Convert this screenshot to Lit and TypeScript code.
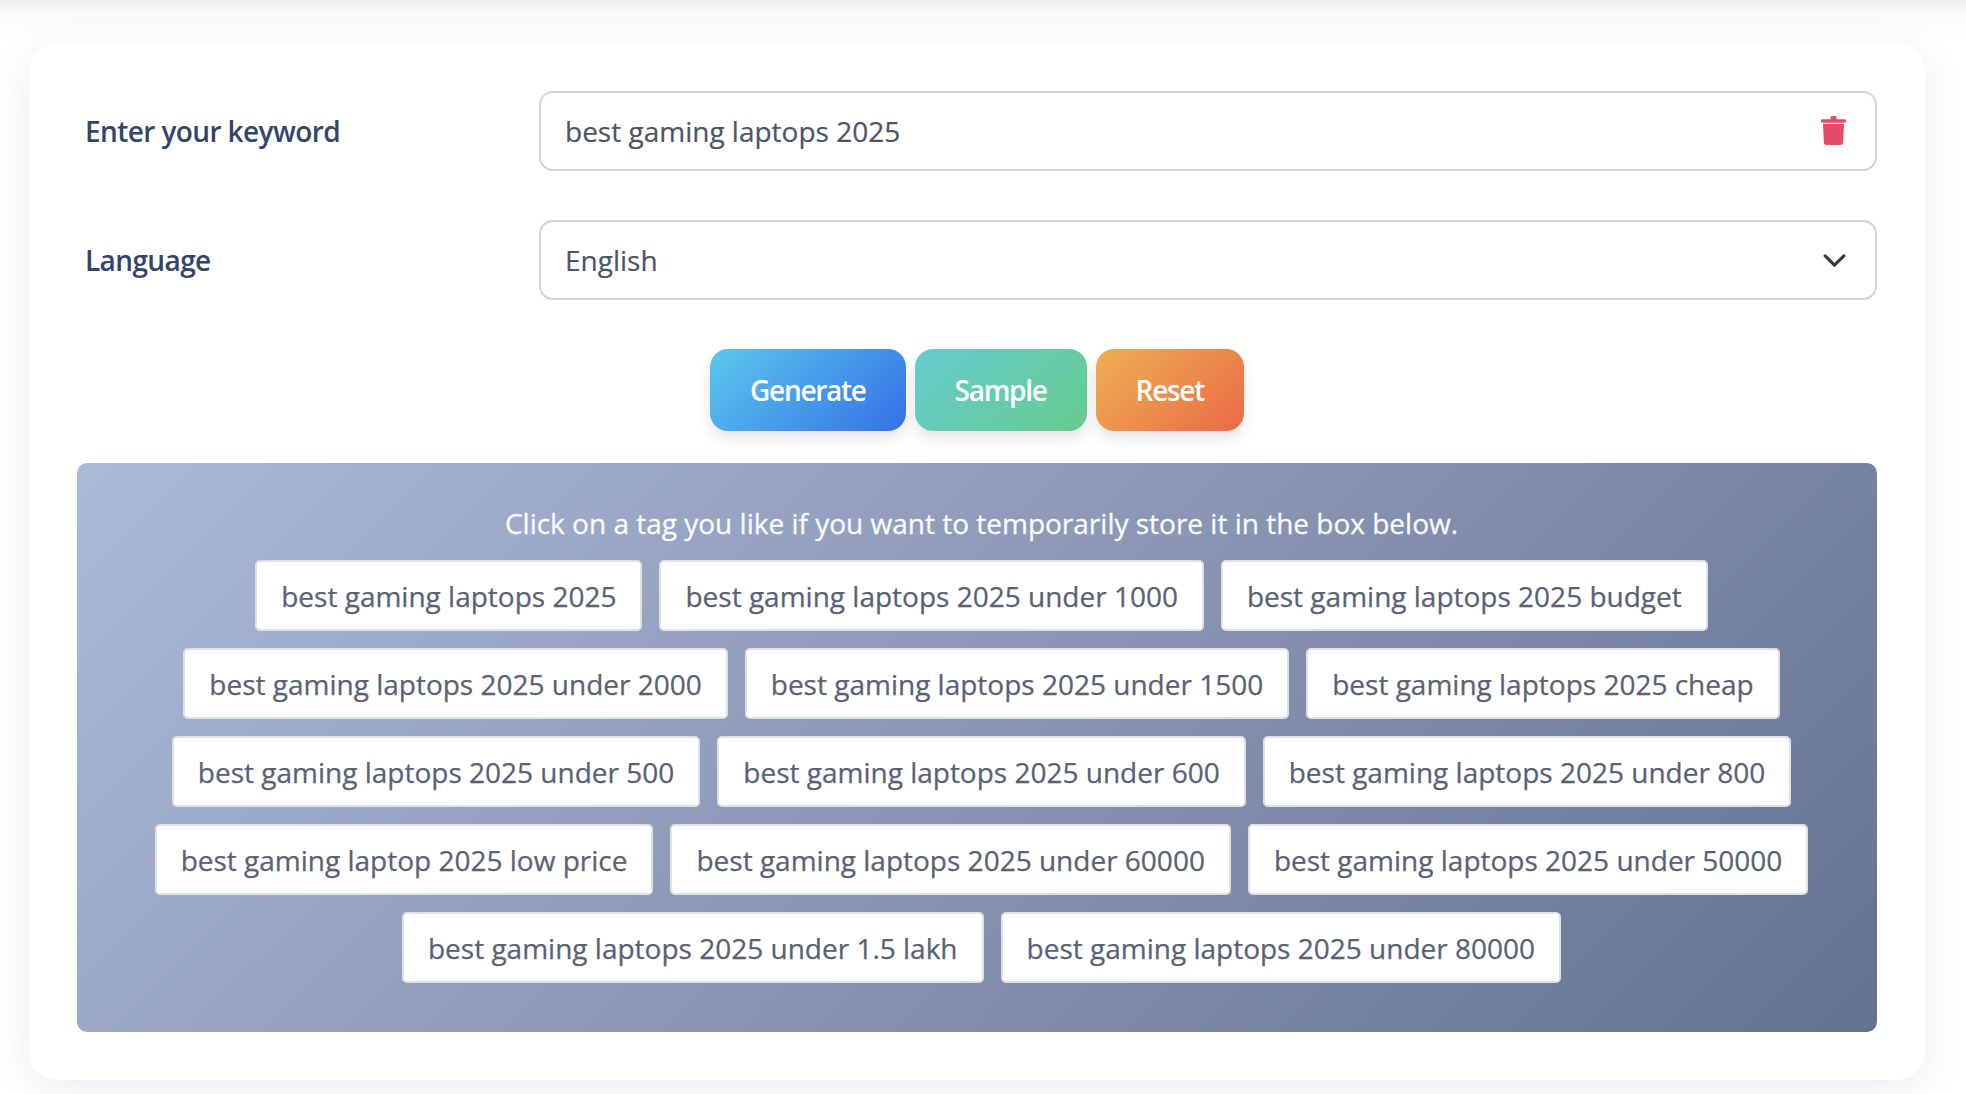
import { LitElement, html, css } from "lit";
import { customElement } from "lit/decorators.js";

const TAGS = [
  "best gaming laptops 2025",
  "best gaming laptops 2025 under 1000",
  "best gaming laptops 2025 budget",
  "best gaming laptops 2025 under 2000",
  "best gaming laptops 2025 under 1500",
  "best gaming laptops 2025 cheap",
  "best gaming laptops 2025 under 500",
  "best gaming laptops 2025 under 600",
  "best gaming laptops 2025 under 800",
  "best gaming laptop 2025 low price",
  "best gaming laptops 2025 under 60000",
  "best gaming laptops 2025 under 50000",
  "best gaming laptops 2025 under 1.5 lakh",
  "best gaming laptops 2025 under 80000",
];

@customElement("app-root")
export class AppRoot extends LitElement {
  static styles = css`
    :host {
      display: block;
      height: 1094px;
      box-sizing: border-box;
      padding: 43px 41px 0 29px;
      overflow: hidden;
      background: linear-gradient(#efeff0 0, #fafafb 14px, #ffffff 40px);
      font-family: "Open Sans", sans-serif;
    }
    .card {
      box-sizing: border-box;
      height: 1037px;
      background: #fff;
      border-radius: 28px;
      padding: 48px 48px 48px 48px;
      box-shadow: 0 8px 40px rgba(60, 80, 120, 0.1);
    }
    .row {
      display: flex;
      align-items: center;
      margin-bottom: 49px;
    }
    .label {
      width: 462px;
      padding-left: 8px;
      box-sizing: border-box;
      font-size: 28px;
      font-weight: 600;
      letter-spacing: -0.6px;
      color: #33456b;
    }
    .field {
      flex: 1;
      height: 80px;
      box-sizing: border-box;
      border: 2px solid #d1d5db;
      border-radius: 14px;
      display: flex;
      align-items: center;
      justify-content: space-between;
      padding: 0 29px 0 24px;
      font-size: 28px;
      color: #4b5563;
      -webkit-text-stroke: 0.2px currentColor;
    }
    .trash { width: 25px; height: 29px; fill: #e64b66; margin-top: -1px; }
    .chev {
      width: 25px;
      height: 25px;
      fill: none;
      stroke: #343a40;
      stroke-width: 2;
      stroke-linecap: round;
      stroke-linejoin: round;
      margin: 0 -1px 0 0;
    }
    .buttons {
      display: flex;
      justify-content: center;
      gap: 9px;
      margin-bottom: 32px;
    }
    .btn {
      height: 82px;
      box-sizing: border-box;
      border: 0;
      border-radius: 18px;
      color: #fff;
      font: 600 28px "Open Sans", sans-serif;
      letter-spacing: -1.3px;
      padding: 0 40px;
      box-shadow: 0 8px 14px rgba(0, 0, 0, 0.1);
    }
    .gen { background: linear-gradient(135deg, #5bc8ee, #3470e6); }
    .sam { background: linear-gradient(135deg, #66cbcf, #66cc8e); }
    .res { background: linear-gradient(135deg, #edb052, #ec6a48); }
    .panel {
      height: 569px;
      box-sizing: border-box;
      border-radius: 10px;
      background: linear-gradient(135deg, #adb9d8, #65728f);
      padding: 41px 24px 0 33px;
      text-align: center;
    }
    .hint {
      font-size: 28px;
      line-height: 38px;
      color: #f8f9fc;
      margin-bottom: 18px;
      -webkit-text-stroke: 0.3px currentColor;
    }
    .tags {
      display: flex;
      flex-wrap: wrap;
      justify-content: center;
      gap: 17px;
    }
    .tag {
      box-sizing: border-box;
      height: 71px;
      display: flex;
      align-items: center;
      padding: 0 24px;
      background: #fff;
      border: 2px solid #dfe1e6;
      border-radius: 5px;
      font-size: 28px;
      color: #596273;
      -webkit-text-stroke: 0.25px currentColor;
    }
  `;
  render() {
    return html`
      <div class="card">
        <div class="row">
          <div class="label">Enter your keyword</div>
          <div class="field">
            <span>best gaming laptops 2025</span>
            <svg class="trash" viewBox="0 0 25 29"><path d="M9.500 3.200V1.600C9.500.7 10.200 0 11 0h3c.8 0 1.500.7 1.500 1.600v1.600h8.400c.6 0 1.100.5 1.100 1.100v1.300c0 .6-.5 1.100-1.100 1.100H1.100C.5 6.700 0 6.200 0 5.600V4.300c0-.6.5-1.100 1.100-1.100z"/><path d="M2 8h21l-.9 18.600c-.1 1.300-1.100 2.400-2.500 2.400H5.400c-1.400 0-2.400-1.100-2.500-2.400z"/></svg>
          </div>
        </div>
        <div class="row">
          <div class="label">Language</div>
          <div class="field">
            <span>English</span>
            <svg class="chev" viewBox="0 0 16 16"><path d="m2 5 6 6 6-6"/></svg>
          </div>
        </div>
        <div class="buttons">
          <button class="btn gen">Generate</button>
          <button class="btn sam">Sample</button>
          <button class="btn res">Reset</button>
        </div>
        <div class="panel">
          <div class="hint">Click on a tag you like if you want to temporarily store it in the box below.</div>
          <div class="tags">${TAGS.map((t) => html`<div class="tag">${t}</div>`)}</div>
        </div>
      </div>
    `;
  }
}
